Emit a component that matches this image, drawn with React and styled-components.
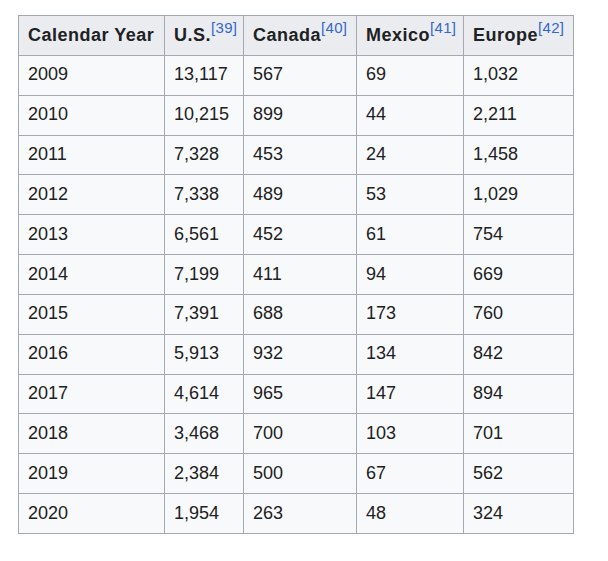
import React from 'react';
import styled, { createGlobalStyle } from 'styled-components';

const GlobalStyle = createGlobalStyle`
  body {
    margin: 0;
    background: #fff;
    font-family: "Liberation Sans", Arial, sans-serif;
    color: #202122;
  }
`;

const Page = styled.div`
  padding: 15px 0 0 18px;
`;

const Table = styled.table`
  border-collapse: collapse;
  table-layout: fixed;
  width: 555px;
  background: #f8f9fa;
  border: 1px solid #a2a9b1;
  font-size: 18px;
`;

const Head = styled.th`
  background: #eaecf0;
  border: 1px solid #a2a9b1;
  padding: 5.5px 9px;
  line-height: 27.85px;
  text-align: left;
  font-weight: bold;
  letter-spacing: 0.5px;
  white-space: nowrap;
`;

const Cell = styled.td`
  border: 1px solid #a2a9b1;
  padding: 5.5px 9px;
  line-height: 27.85px;
  text-align: left;
`;

// sup lifted without growing the header line box
const Ref = styled.sup`
  font-size: 15px;
  font-weight: normal;
  letter-spacing: 0.3px;
  line-height: 0;
  vertical-align: baseline;
  position: relative;
  top: -8px;
  color: #3366cc;
`;

const columns = [
  { label: 'Calendar Year', width: 146 },
  { label: 'U.S.', ref: 39, width: 79 },
  { label: 'Canada', ref: 40, width: 113 },
  { label: 'Mexico', ref: 41, width: 107 },
  { label: 'Europe', ref: 42, width: 110 },
];

const rows = [
  ['2009', '13,117', '567', '69', '1,032'],
  ['2010', '10,215', '899', '44', '2,211'],
  ['2011', '7,328', '453', '24', '1,458'],
  ['2012', '7,338', '489', '53', '1,029'],
  ['2013', '6,561', '452', '61', '754'],
  ['2014', '7,199', '411', '94', '669'],
  ['2015', '7,391', '688', '173', '760'],
  ['2016', '5,913', '932', '134', '842'],
  ['2017', '4,614', '965', '147', '894'],
  ['2018', '3,468', '700', '103', '701'],
  ['2019', '2,384', '500', '67', '562'],
  ['2020', '1,954', '263', '48', '324'],
];

export default function App() {
  return (
    <Page>
      <GlobalStyle />
      <Table>
        <colgroup>
          {columns.map((c) => (
            <col key={c.label} style={{ width: c.width }} />
          ))}
        </colgroup>
        <thead>
          <tr>
            {columns.map((c) => (
              <Head key={c.label}>
                {c.label}
                {c.ref && <Ref>[{c.ref}]</Ref>}
              </Head>
            ))}
          </tr>
        </thead>
        <tbody>
          {rows.map((r) => (
            <tr key={r[0]}>
              {r.map((v, i) => (
                <Cell key={i}>{v}</Cell>
              ))}
            </tr>
          ))}
        </tbody>
      </Table>
    </Page>
  );
}
